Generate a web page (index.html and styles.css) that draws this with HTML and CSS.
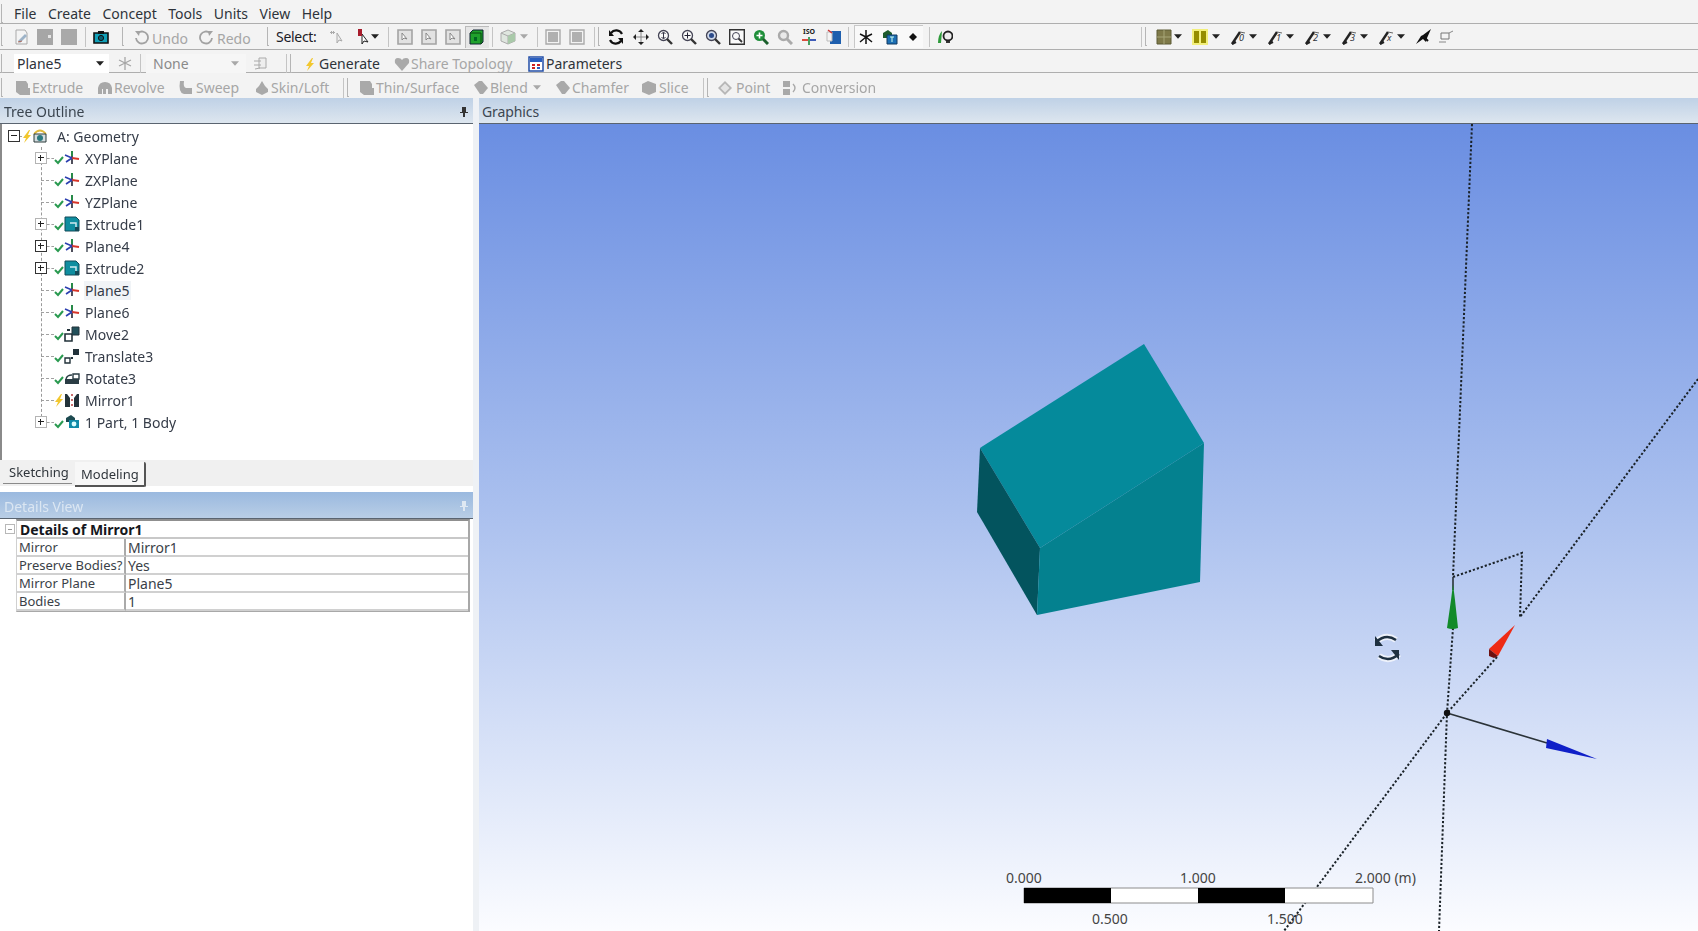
FILE: index.html
```html
<!DOCTYPE html>
<html>
<head>
    <title>DesignModeler</title>
    <link rel="stylesheet" href="styles.css">
</head>
<body>

<svg class="defs">
    <symbol id="caret" viewBox="0 0 9 5"><path d="M0 0h9L4.5 5z"/></symbol>
    <symbol id="check" viewBox="0 0 10 16"><path d="M1 10l3 3 5-6" fill="none" stroke="#2a9a50" stroke-width="2"/></symbol>
    <symbol id="bolt" viewBox="0 0 10 16"><path d="M7 2L1 10h3l-2 5 7-8H6l2-5z" fill="#f2c72e"/></symbol>
    <symbol id="plane" viewBox="0 0 16 16"><path d="M8 1v13" stroke="#223" stroke-width="1.6"/><path d="M8 1v5" stroke="#1f9a45" stroke-width="1.6"/><path d="M8 8l7 1" stroke="#d8362a" stroke-width="2"/><path d="M8 8L1 5M8 8l-6 4" stroke="#2b3fb0" stroke-width="1.6"/></symbol>
    <symbol id="extrude" viewBox="0 0 16 16"><path d="M1 1h11l3 3v11H1z" fill="#0f8ea0" stroke="#134a58"/><path d="M6 7h6v6" fill="none" stroke="#cfeaf0" stroke-width="1.5"/><path d="M11 11h4v4h-4z" fill="#134a58"/></symbol>
    <symbol id="geom" viewBox="0 0 16 16"><path d="M2 6q6-7 12 0" fill="none" stroke="#e0b93a" stroke-width="1.8"/><path d="M2 6h12v8H2z" fill="#d5dde0" stroke="#2a3a3a"/><circle cx="8" cy="10" r="3" fill="#2b7a80"/></symbol>
    <symbol id="move" viewBox="0 0 16 16"><path d="M1 8h7v7H1z" fill="#fff" stroke="#22323a" stroke-width="1.6"/><path d="M8 1h7v8H8z" fill="#22505a" stroke="#22323a"/><path d="M3 3h3v2H3z" fill="#22323a"/></symbol>
    <symbol id="translate" viewBox="0 0 16 16"><path d="M1 10h5v5H1z" fill="#fff" stroke="#22323a" stroke-width="1.4"/><path d="M9 1h6v6H9z" fill="#22323a"/><path d="M7 9h2v2H7z" fill="#22323a"/></symbol>
    <symbol id="rotate" viewBox="0 0 16 16"><path d="M1 9h14v5H1z" fill="#2a3c44"/><path d="M9 4h6v5H9z" fill="#fff" stroke="#2a3c44" stroke-width="1.4"/><path d="M2 9q1-4 6-4" fill="none" stroke="#2a3c44" stroke-width="1.4"/></symbol>
    <symbol id="mirror" viewBox="0 0 16 16"><path d="M1 15V2h2l3 4v9z" fill="#22323a"/><path d="M15 15V2h-2l-3 4v9z" fill="#22323a"/><path d="M8 2v2M8 7v2M8 12v2" stroke="#b03030" stroke-width="1.4"/></symbol>
    <symbol id="part" viewBox="0 0 16 16"><path d="M2 4l5-3 4 3v4H2z" fill="#1d4a50"/><path d="M5 6h10v8H5z" fill="#108ba8" rx="2"/><circle cx="10" cy="10" r="2.4" fill="#dff"/></symbol>

    <symbol id="t-new" viewBox="0 0 16 16"><path d="M3 1h9l2 3v11H3z" fill="#f4f4f4" stroke="#a9a9a9"/><path d="M5 12l7-7 2 2-7 7z" fill="#9db3c8"/><path d="M5 13l4-1" stroke="#b06c5c"/></symbol>
    <symbol id="t-save" viewBox="0 0 16 16"><path d="M0 0h16v16H0z" fill="#a6a6a6"/><path d="M11 6h3v3h-3z" fill="#e4e4e4"/></symbol>
    <symbol id="t-fill" viewBox="0 0 16 16"><path d="M0 0h16v16H0z" fill="#a9a9a9"/></symbol>
    <symbol id="t-cam" viewBox="0 0 16 16"><path d="M1 4h14v10H1z" fill="#12a0b8" stroke="#111" stroke-width="1.6"/><path d="M5 2h6v3H5z" fill="#111"/><circle cx="8" cy="9" r="2.6" fill="#0b5d70" stroke="#111"/></symbol>
    <symbol id="t-undo" viewBox="0 0 16 16"><path d="M5 4a6 6 0 1 1-2 5" fill="none" stroke="#a2a2a2" stroke-width="1.8"/><path d="M2 2l5 0-1 5z" fill="#a2a2a2"/></symbol>
    <symbol id="t-redo" viewBox="0 0 16 16"><path d="M11 4a6 6 0 1 0 2 5" fill="none" stroke="#a2a2a2" stroke-width="1.8"/><path d="M14 2H9l1 5z" fill="#a2a2a2"/></symbol>
    <symbol id="t-sel0" viewBox="0 0 16 16"><path d="M9 4v10l2-3 3 1z" fill="#eee" stroke="#aaa"/><path d="M3 2l3 3M6 2L3 5M2 3.500h5" stroke="#aaa"/></symbol>
    <symbol id="t-sel1" viewBox="0 0 16 16"><path d="M7 5v10l2-3 4 1z" fill="#fff" stroke="#222"/><path d="M3 0h4v7H3z" fill="#a81c2c"/></symbol>
    <symbol id="t-box" viewBox="0 0 16 16"><path d="M1 1h14v14H1z" fill="#e2e2e2" stroke="#a4a4a4" stroke-width="1.6"/><path d="M5 4v7l2-2 3 1z" fill="#fff" stroke="#888"/></symbol>
    <symbol id="t-green" viewBox="0 0 16 16"><path d="M1 4l3-3h10v12l-2 2H1z" fill="#1fa12c" stroke="#123"/><path d="M1 4h11v11" fill="none" stroke="#0a4a10"/><path d="M5 8h3v4H5z" fill="#062"/></symbol>
    <symbol id="t-cube" viewBox="0 0 16 16"><path d="M8 1l7 3v8l-7 3-7-3V4z" fill="#dfe6df" stroke="#aaa"/><path d="M1 4l7 3 7-3M8 7v8" fill="none" stroke="#aaa"/><path d="M8 7l7-3v8l-7 3z" fill="#a9c9a9"/></symbol>
    <symbol id="t-frame" viewBox="0 0 16 16"><path d="M1 1h14v14H1z" fill="none" stroke="#aaa" stroke-width="1.4"/><path d="M3 3h10v10H3z" fill="#b0b0b0"/></symbol>
    <symbol id="t-rot" viewBox="0 0 16 16"><path d="M14 5A6.500 6.500 0 0 0 3 4M2 11a6.500 6.500 0 0 0 11 1" fill="none" stroke="#111" stroke-width="2.200"/><path d="M1 1v6h5zM15 15V9h-5z" fill="#111"/></symbol>
    <symbol id="t-pan" viewBox="0 0 16 16"><path d="M8 0l3 3H5zM8 16l-3-3h6zM0 8l3-3v6zM16 8l-3 3V5z" fill="#222"/><path d="M8 3v10M3 8h10" stroke="#888"/></symbol>
    <symbol id="t-zoom" viewBox="0 0 16 16"><circle cx="6.500" cy="6.500" r="5" fill="#f8f8f8" stroke="#445" stroke-width="1.300"/><path d="M10 10l5 5" stroke="#333" stroke-width="2.400"/><path d="M6.500 3.500v6M4.500 5l2-2 2 2M4.500 8l2 2 2-2" fill="none" stroke="#334"/></symbol>
    <symbol id="t-zplus" viewBox="0 0 16 16"><circle cx="6.500" cy="6.500" r="5" fill="#f8f8f8" stroke="#445" stroke-width="1.300"/><path d="M10 10l5 5" stroke="#333" stroke-width="2.400"/><path d="M6.500 3.500v6M3.500 6.500h6" stroke="#223"/></symbol>
    <symbol id="t-zfit" viewBox="0 0 16 16"><circle cx="6.500" cy="6.500" r="5" fill="#cfd9ea" stroke="#445" stroke-width="1.300"/><path d="M10 10l5 5" stroke="#333" stroke-width="2.400"/><circle cx="6.500" cy="6.500" r="2.500" fill="#2b4a8a"/></symbol>
    <symbol id="t-zbox" viewBox="0 0 16 16"><path d="M.7.7h14.600v14.600H.7z" fill="#fafafa" stroke="#333" stroke-width="1.400"/><circle cx="7" cy="7" r="3.500" fill="none" stroke="#445"/><path d="M9.500 9.500l3.500 3.500" stroke="#333" stroke-width="1.800"/></symbol>
    <symbol id="t-zgreen" viewBox="0 0 16 16"><circle cx="6.500" cy="6.500" r="5.500" fill="#1f8f3a"/><path d="M10 10l5 5" stroke="#1b5f2c" stroke-width="3"/><path d="M6.500 3.500v6M3.500 6.500h6" stroke="#fff" stroke-width="1.600"/></symbol>
    <symbol id="t-zgrey" viewBox="0 0 16 16"><circle cx="6.500" cy="6.500" r="4.500" fill="#e9e9e9" stroke="#aaa" stroke-width="2.400"/><path d="M10 10l5 5" stroke="#aaa" stroke-width="3"/></symbol>
    <symbol id="t-iso" viewBox="0 0 16 16"><path d="M8 8v8" stroke="#1a8a3a" stroke-width="1.600"/><path d="M1 11h6" stroke="#d83a2a" stroke-width="1.800"/><path d="M9 11h6" stroke="#2a4ab0" stroke-width="1.800"/></symbol>
    <symbol id="t-book" viewBox="0 0 16 16"><path d="M4 2h11v13H4z" fill="#1e5fae"/><path d="M1 3h5v9H1z" fill="#f4f4f4" stroke="#bbb"/><path d="M2 1l4 3" stroke="#c33" stroke-width="1.500"/></symbol>
    <symbol id="t-ax" viewBox="0 0 16 16"><path d="M8 1v14M8 8l6 5M8 8l-6 5M8 8L2 5M8 8l6-3" stroke="#111" stroke-width="1.500"/></symbol>
    <symbol id="t-blue" viewBox="0 0 16 16"><path d="M1 4l5-3 4 3v5H1z" fill="#1d5a2c"/><path d="M5 6h10v9H5z" fill="#1c6fb4" stroke="#123a60"/><path d="M8 8h4M10 8v5" stroke="#cfe"/></symbol>
    <symbol id="t-dot" viewBox="0 0 16 16"><path d="M8 4l4 4-4 4-4-4z" fill="#111"/></symbol>
    <symbol id="t-head" viewBox="0 0 16 16"><path d="M1 14q0-8 4-12l-1 12z" fill="#2d9a3a"/><circle cx="11" cy="7" r="4.500" fill="#eee" stroke="#222" stroke-width="1.800"/><path d="M9 13h4" stroke="#222" stroke-width="1.800"/></symbol>
    <symbol id="t-brown" viewBox="0 0 16 16"><path d="M1 1h14v14H1z" fill="#7f7a4a" stroke="#5c5a35"/><path d="M8 1v14M1 8h14" stroke="#a8a678"/></symbol>
    <symbol id="t-yellow" viewBox="0 0 16 16"><path d="M0 0h16v16H0z" fill="#f2ef7a"/><path d="M2 2h5v12H2zM9 2h5v12H9z" fill="#958d00"/></symbol>
    <symbol id="t-filter" viewBox="0 0 16 16"><path d="M1 15L9 3" stroke="#222" stroke-width="2.400"/><path d="M9 3l5 1" stroke="#666"/><path d="M1 15l4-2" stroke="#222" stroke-width="2"/></symbol>
    <symbol id="t-jet" viewBox="0 0 16 16"><path d="M0 15l5-8 2-1 8-6-4 9-1 4-3-3z" fill="#111"/><path d="M9 9l3 3" stroke="#111" stroke-width="2"/></symbol>
    <symbol id="t-small" viewBox="0 0 16 16"><path d="M3 4h8v6H3z" fill="#f4f4f4" stroke="#777"/><path d="M1 13h7M11 4l4-2" stroke="#888"/></symbol>
    <symbol id="t-plane-g" viewBox="0 0 16 16"><path d="M8 1v13M8 7l6 3M8 7l-6 3M8 7L2 4M8 7l6-3" stroke="#a6a6a6" stroke-width="1.300"/></symbol>
    <symbol id="t-note" viewBox="0 0 16 16"><path d="M7 2h7v10H7z" fill="#eee" stroke="#aaa"/><path d="M2 5h7M2 9h7M3 13l5-1" stroke="#aaa"/></symbol>
    <symbol id="t-heart" viewBox="0 0 16 16"><path d="M8 15L1 7q-1-5 3-5 3 0 4 2 1-2 4-2 4 0 3 5z" fill="#a9a9a9"/></symbol>
    <symbol id="t-param" viewBox="0 0 16 16"><path d="M1 1h14v14H1z" fill="#fff" stroke="#234fa8" stroke-width="1.500"/><path d="M2 2h12v4H2z" fill="#2a5fc0"/><path d="M4 8h3v2H4zM9 8h3v2H9zM4 11h3v2H4z" fill="#c22"/><path d="M9 11h3v2H9z" fill="#2a5fc0"/></symbol>
    <symbol id="t-solid" viewBox="0 0 16 16"><path d="M1 1h10l2 3v4h2v7H5l-4-3z" fill="#a9a9a9"/></symbol>
    <symbol id="t-revolve" viewBox="0 0 16 16"><path d="M1 14V8q1-6 7-6t7 6v6h-4V9H9v5H6V9H5v5z" fill="#a9a9a9"/></symbol>
    <symbol id="t-sweep" viewBox="0 0 16 16"><path d="M3 1h4q-1 6 2 7h6v6H7Q1 13 3 1z" fill="#a9a9a9"/></symbol>
    <symbol id="t-skin" viewBox="0 0 16 16"><path d="M8 1l3 5 3 3v3l-6 3-6-3V9l3-3z" fill="#a9a9a9"/></symbol>
    <symbol id="t-diamond" viewBox="0 0 16 16"><path d="M1 5l5-4h3l6 7-5 6H7z" fill="#a9a9a9"/></symbol>
    <symbol id="t-slice" viewBox="0 0 16 16"><path d="M1 4l6-3 8 3v8l-7 3-7-3z" fill="#a9a9a9"/></symbol>
    <symbol id="t-point" viewBox="0 0 16 16"><path d="M8 1l7 7-7 7-7-7z" fill="#b6b6b6"/><path d="M8 3.500L12.500 8 8 12.500 3.500 8z" fill="#e4e4e4"/></symbol>
    <symbol id="t-conv" viewBox="0 0 16 16"><path d="M1 1h7v6H1zM1 9h7v6H1z" fill="#a9a9a9"/><path d="M11 4q4 4 0 8" fill="none" stroke="#a9a9a9" stroke-width="1.400"/></symbol>
</svg>

<div class="app">

<div class="menubar">
    <span class="grip"></span>
    <span class="menu first">File</span>
    <span class="menu">Create</span>
    <span class="menu">Concept</span>
    <span class="menu">Tools</span>
    <span class="menu">Units</span>
    <span class="menu">View</span>
    <span class="menu">Help</span>
</div>

<div class="toolbar row1">
    <span class="grip"></span>
    <span class="ib m5"><svg><use href="#t-new"/></svg></span>
    <span class="ib"><svg><use href="#t-save"/></svg></span>
    <span class="ib"><svg><use href="#t-fill"/></svg></span>
    <span class="sep m4"></span>
    <span class="ib m3"><svg><use href="#t-cam"/></svg></span>
    <span class="grip m9"></span>
    <svg class="ic m8"><use href="#t-undo"/></svg>
    <span class="off low m3 w34">Undo</span>
    <svg class="ic m13"><use href="#t-redo"/></svg>
    <span class="off low m2 w34">Redo</span>
    <span class="grip m16"></span>
    <span class="m6 sel">Select:</span>
    <span class="ib m5"><svg><use href="#t-sel0"/></svg></span>
    <svg class="ic m7"><use href="#t-sel1"/></svg>
    <svg class="caret"><use href="#caret"/></svg>
    <span class="sep m9"></span>
    <span class="ib m4"><svg><use href="#t-box"/></svg></span>
    <span class="ib"><svg><use href="#t-box"/></svg></span>
    <span class="ib"><svg><use href="#t-box"/></svg></span>
    <span class="ib on"><svg><use href="#t-green"/></svg></span>
    <span class="sep m3"></span>
    <svg class="ic m7"><use href="#t-cube"/></svg>
    <svg class="caret off-caret m4"><use href="#caret"/></svg>
    <span class="sep m9"></span>
    <span class="ib m3"><svg><use href="#t-frame"/></svg></span>
    <span class="ib"><svg><use href="#t-frame"/></svg></span>
    <span class="sep m5"></span>
    <span class="grip m3"></span>
    <span class="ib m3"><svg><use href="#t-rot"/></svg></span>
    <span class="ib m1"><svg><use href="#t-pan"/></svg></span>
    <span class="ib"><svg><use href="#t-zoom"/></svg></span>
    <span class="ib"><svg><use href="#t-zplus"/></svg></span>
    <span class="ib"><svg><use href="#t-zfit"/></svg></span>
    <span class="ib"><svg><use href="#t-zbox"/></svg></span>
    <span class="ib"><svg><use href="#t-zgreen"/></svg></span>
    <span class="ib"><svg><use href="#t-zgrey"/></svg></span>
    <span class="ib iso"><b>ISO</b><svg><use href="#t-iso"/></svg></span>
    <span class="ib m1"><svg><use href="#t-book"/></svg></span>
    <span class="sep m2"></span>
    <span class="toggles m5">
        <span class="ib"><svg><use href="#t-ax"/></svg></span>
        <span class="ib"><svg><use href="#t-blue"/></svg></span>
        <span class="ib last"><svg><use href="#t-dot"/></svg></span>
    </span>
    <span class="sep m6"></span>
    <span class="ib m3"><svg><use href="#t-head"/></svg></span>
    <span class="sep m184"></span>
    <span class="grip m3"></span>
    <svg class="ic m8"><use href="#t-brown"/></svg>
    <svg class="caret m2"><use href="#caret"/></svg>
    <svg class="ic m10"><use href="#t-yellow"/></svg>
    <svg class="caret m4"><use href="#caret"/></svg>
    <span class="flt m11"><svg><use href="#t-filter"/></svg><b>0</b></span>
    <svg class="caret m2"><use href="#caret"/></svg>
    <span class="flt m11"><svg><use href="#t-filter"/></svg><b>1</b></span>
    <svg class="caret m2"><use href="#caret"/></svg>
    <span class="flt m11"><svg><use href="#t-filter"/></svg><b>2</b></span>
    <svg class="caret m2"><use href="#caret"/></svg>
    <span class="flt m11"><svg><use href="#t-filter"/></svg><b>3</b></span>
    <svg class="caret m2"><use href="#caret"/></svg>
    <span class="flt m11"><svg><use href="#t-filter"/></svg><b>x</b></span>
    <svg class="caret m2"><use href="#caret"/></svg>
    <svg class="ic m11"><use href="#t-jet"/></svg>
    <svg class="ic m6"><use href="#t-small"/></svg>
</div>

<div class="toolbar row2">
    <span class="grip"></span>
    <span class="combo m10">Plane5<svg class="caret"><use href="#caret"/></svg></span>
    <svg class="ic m8"><use href="#t-plane-g"/></svg>
    <span class="sep m7"></span>
    <span class="combo none m5">None<svg class="caret off-caret"><use href="#caret"/></svg></span>
    <svg class="ic m6"><use href="#t-note"/></svg>
    <span class="sep m18"></span>
    <span class="grip m3"></span>
    <svg class="ic m9"><use href="#bolt"/></svg>
    <span class="m1 w60">Generate</span>
    <svg class="ic m15"><use href="#t-heart"/></svg>
    <span class="off m1 w103">Share Topology</span>
    <svg class="ic m14"><use href="#t-param"/></svg>
    <span class="m2">Parameters</span>
</div>

<div class="toolbar row3">
    <span class="grip"></span>
    <svg class="ic m11"><use href="#t-solid"/></svg><span class="off m1 w49">Extrude</span>
    <svg class="ic m16"><use href="#t-revolve"/></svg><span class="off m1 w50">Revolve</span>
    <svg class="ic m13"><use href="#t-sweep"/></svg><span class="off m3 w43">Sweep</span>
    <svg class="ic m15"><use href="#t-skin"/></svg><span class="off m1 w58">Skin/Loft</span>
    <span class="sep m14"></span>
    <span class="grip m3"></span>
    <svg class="ic m9"><use href="#t-solid"/></svg><span class="off m1 w82">Thin/Surface</span>
    <svg class="ic m15"><use href="#t-diamond"/></svg><span class="off m1 w38">Blend</span>
    <svg class="caret off-caret m5"><use href="#caret"/></svg>
    <svg class="ic m14"><use href="#t-diamond"/></svg><span class="off m1 w56">Chamfer</span>
    <svg class="ic m13"><use href="#t-slice"/></svg><span class="off m2 w30">Slice</span>
    <span class="sep m14"></span>
    <span class="grip m3"></span>
    <svg class="ic m7"><use href="#t-point"/></svg><span class="off m3 w33">Point</span>
    <svg class="ic m13"><use href="#t-conv"/></svg><span class="off m4">Conversion</span>
</div>

<div class="main">
    <div class="left">
        <div class="paneHead">
            <span>Tree Outline</span>
            <svg class="pin" viewBox="0 0 8 10"><path d="M2 0h4v5h2v1H5v4H3V6H0V5h2z" fill="#333"/></svg>
        </div>
        <div class="tree">
            <div class="treeRow root">
                <span class="exp"><i></i></span><span class="stub s3"></span>
                <svg class="bolt"><use href="#bolt"/></svg>
                <svg class="ti"><use href="#geom"/></svg>
                <span class="label rootLabel">A: Geometry</span>
            </div>
            <div class="kids">
                <div class="treeRow"><span class="exp dim"><i></i><u></u></span><span class="stub"></span><svg class="chk"><use href="#check"/></svg><svg class="ti"><use href="#plane"/></svg><span class="label">XYPlane</span></div>
                <div class="treeRow"><span class="gap"></span><span class="stub long"></span><svg class="chk"><use href="#check"/></svg><svg class="ti"><use href="#plane"/></svg><span class="label">ZXPlane</span></div>
                <div class="treeRow"><span class="gap"></span><span class="stub long"></span><svg class="chk"><use href="#check"/></svg><svg class="ti"><use href="#plane"/></svg><span class="label">YZPlane</span></div>
                <div class="treeRow"><span class="exp dim"><i></i><u></u></span><span class="stub"></span><svg class="chk"><use href="#check"/></svg><svg class="ti"><use href="#extrude"/></svg><span class="label">Extrude1</span></div>
                <div class="treeRow"><span class="exp"><i></i><u></u></span><span class="stub"></span><svg class="chk"><use href="#check"/></svg><svg class="ti"><use href="#plane"/></svg><span class="label">Plane4</span></div>
                <div class="treeRow"><span class="exp"><i></i><u></u></span><span class="stub"></span><svg class="chk"><use href="#check"/></svg><svg class="ti"><use href="#extrude"/></svg><span class="label">Extrude2</span></div>
                <div class="treeRow"><span class="gap"></span><span class="stub long"></span><svg class="chk"><use href="#check"/></svg><svg class="ti"><use href="#plane"/></svg><span class="label current">Plane5</span></div>
                <div class="treeRow"><span class="gap"></span><span class="stub long"></span><svg class="chk"><use href="#check"/></svg><svg class="ti"><use href="#plane"/></svg><span class="label">Plane6</span></div>
                <div class="treeRow"><span class="gap"></span><span class="stub long"></span><svg class="chk"><use href="#check"/></svg><svg class="ti"><use href="#move"/></svg><span class="label">Move2</span></div>
                <div class="treeRow"><span class="gap"></span><span class="stub long"></span><svg class="chk"><use href="#check"/></svg><svg class="ti"><use href="#translate"/></svg><span class="label">Translate3</span></div>
                <div class="treeRow"><span class="gap"></span><span class="stub long"></span><svg class="chk"><use href="#check"/></svg><svg class="ti"><use href="#rotate"/></svg><span class="label">Rotate3</span></div>
                <div class="treeRow"><span class="gap"></span><span class="stub long"></span><svg class="chk"><use href="#bolt"/></svg><svg class="ti"><use href="#mirror"/></svg><span class="label">Mirror1</span></div>
                <div class="treeRow"><span class="exp dim"><i></i><u></u></span><span class="stub"></span><svg class="chk"><use href="#check"/></svg><svg class="ti"><use href="#part"/></svg><span class="label">1 Part, 1 Body</span></div>
            </div>
        </div>
        <div class="tabs">
            <span class="tab">Sketching</span>
            <span class="tab active">Modeling</span>
        </div>
        <div class="paneHead details">
            <span>Details View</span>
            <svg class="pin" viewBox="0 0 8 10"><path d="M2 0h4v5h2v1H5v4H3V6H0V5h2z" fill="#dfe8f2"/></svg>
        </div>
        <div class="detailsBody">
            <span class="collapse"><i></i></span>
            <div class="grid">
                <div class="gridHead">Details of Mirror1</div>
                <div class="cell key">Mirror</div><div class="cell val">Mirror1</div>
                <div class="cell key">Preserve Bodies?</div><div class="cell val">Yes</div>
                <div class="cell key">Mirror Plane</div><div class="cell val">Plane5</div>
                <div class="cell key">Bodies</div><div class="cell val">1</div>
            </div>
        </div>
    </div>
    <div class="sash"></div>
    <div class="right">
        <div class="paneHead"><span>Graphics</span></div>
        <div class="canvas">
            <svg class="scene" viewBox="479 124 1219 807">
                <!-- body -->
                <path d="M980 448L1144 344L1204 443L1040 548z" fill="#058a9b"/>
                <path d="M980 448L977 512L1037 615L1040 548z" fill="#03545e"/>
                <path d="M1040 548L1204 443L1200 582L1037 615z" fill="#04818f"/>

                <!-- triad dotted lines -->
                <g class="dots">
                    <path d="M1472 124L1453 577M1453 628L1447 713L1439 931"/>
                    <path d="M1453 577L1522 553L1520 617"/>
                    <path d="M1698 379L1520 617M1497 657L1447 713L1284 931"/>
                </g>
                <path d="M1453 577V590M1447 713L1547 743" stroke="#2b3338" stroke-width="1.600" fill="none"/>
                <circle cx="1447" cy="713" r="3.200" fill="#111"/>
                <path d="M1453 584L1451 600L1447 628Q1452 630 1458 628L1455 600z" fill="#118a2a"/>
                <path d="M1515 625L1489 649L1498 656z" fill="#ee2a14"/>
                <path d="M1489 649L1489 656L1494 658L1498 656z" fill="#6e1010"/>
                <path d="M1547 739L1546 748L1597 759z" fill="#0f1fc8"/>

                <!-- rotate cursor -->
                <g class="spinHalo">
                    <path d="M1376 642q10-9 20-2M1399 654q-10 9-20 2"/>
                </g>
                <g class="spin">
                    <path d="M1376 642q10-9 20-2M1399 654q-10 9-20 2"/>
                </g>
                <g fill="#1e3040">
                    <path d="M1375 636v10h8z"/>
                    <path d="M1399 660v-10h-8z"/>
                </g>

                <!-- scale -->
                <path d="M1024 888h349v15h-349z" fill="#fff" stroke="#8c8c8c"/>
                <path d="M1024 888h87v15h-87zM1198 888h87v15h-87z" fill="#000"/>
                <g class="ticks">
                    <text x="1024" y="883" text-anchor="middle">0.000</text>
                    <text x="1198" y="883" text-anchor="middle">1.000</text>
                    <text x="1355" y="883">2.000 (m)</text>
                    <text x="1110" y="924" text-anchor="middle">0.500</text>
                    <text x="1285" y="924" text-anchor="middle">1.500</text>
                </g>
            </svg>
        </div>
    </div>
</div>

</div>

</body>
</html>
```

FILE: styles.css
```css
html, body {
    margin: 0;
    padding: 0;
    height: 100%;
    overflow: hidden;
}

body {
    font-family: "Noto Sans", "Open Sans", sans-serif;
    font-size: 14px;
    color: #2e333a;
    background-color: #f2f2f2;
}

.defs {
    position: absolute;
    width: 0;
    height: 0;
}

.app {
    height: 931px;
    display: flex;
    flex-direction: column;
    filter: blur(0.4px);
}

/* toolbars */
.menubar, .toolbar {
    display: flex;
    align-items: center;
    flex: none;
    box-sizing: border-box;
    padding-left: 1px;
    background-color: #f3f3f3;
    border-bottom: 1px solid #aeaeae;
    white-space: nowrap;
}

.menubar { height: 24px; padding-top: 4px; }
.row1 { height: 26px; }
.row2 { height: 23px; padding-top: 5px; }
.row3 { height: 25px; padding-top: 4px; border-bottom: none; }

.menu { margin-left: 11.5px; }
.menu.first { margin-left: 10px; }

.grip {
    width: 1px;
    height: 18px;
    border-left: 1px solid #b5b5b5;
    border-bottom: 1px solid #b5b5b5;
    margin-right: 1px;
    flex: none;
}

.sep {
    width: 1px;
    height: 20px;
    background-color: #c4c4c4;
    flex: none;
}

.ib {
    position: relative;
    width: 24px;
    height: 22px;
    display: flex;
    align-items: center;
    justify-content: center;
    flex: none;
}

.ib svg, .ic {
    width: 16px;
    height: 16px;
    flex: none;
}

.ib.on {
    background-color: #e6e6e6;
    box-shadow: inset 1px 1px #bbb;
}

.iso b {
    position: absolute;
    top: 2px;
    left: 0;
    right: 0;
    text-align: center;
    font-size: 7px;
    line-height: 8px;
    color: #222;
}

.caret {
    width: 8px;
    height: 5px;
    fill: #222;
    flex: none;
}

.off-caret { fill: #a8a8a8; }
.off { color: #a6a6a6; }
.low { padding-top: 4px; }
.sel { width: 43px; letter-spacing: -0.3px; color: #1c2026; }

.toggles {
    display: flex;
    background-color: #f9f9f9;
    border-top: 1px solid #c8c8c8;
    box-shadow: inset 1px 0 #c8c8c8;
}

.toggles .last { width: 21px; }

.flt {
    position: relative;
    width: 16px;
    height: 16px;
    flex: none;
}

.flt svg {
    width: 16px;
    height: 16px;
}

.flt b {
    position: absolute;
    left: 8px;
    top: 3px;
    font-size: 9px;
    font-weight: 400;
    font-style: italic;
    line-height: 12px;
}

.combo {
    display: flex;
    align-items: center;
    justify-content: space-between;
    width: 95px;
    height: 20px;
    padding: 0 5px 0 3px;
    box-sizing: border-box;
    background-color: #fff;
}

.combo.none {
    width: 100px;
    padding-left: 7px;
    padding-right: 7px;
    background-color: #f6f6f6;
    color: #8a8a8a;
}

.w30 { width: 30px; }
.w33 { width: 33px; }
.w34 { width: 34px; }
.w38 { width: 38px; }
.w43 { width: 43px; }
.w49 { width: 49px; }
.w50 { width: 50px; }
.w56 { width: 56px; }
.w58 { width: 58px; }
.w60 { width: 60px; }
.w82 { width: 82px; }
.w103 { width: 103px; }

.m1 { margin-left: 1px; }
.m2 { margin-left: 2px; }
.m3 { margin-left: 3px; }
.m4 { margin-left: 4px; }
.m5 { margin-left: 5px; }
.m6 { margin-left: 6px; }
.m7 { margin-left: 7px; }
.m8 { margin-left: 8px; }
.m9 { margin-left: 9px; }
.m10 { margin-left: 10px; }
.m11 { margin-left: 11px; }
.m13 { margin-left: 13px; }
.m14 { margin-left: 14px; }
.m15 { margin-left: 15px; }
.m16 { margin-left: 16px; }
.m18 { margin-left: 18px; }
.m184 { margin-left: 184px; }

/* panes */
.main {
    flex: 1;
    display: flex;
    min-height: 0;
}

.left {
    width: 473px;
    display: flex;
    flex-direction: column;
    background-color: #fff;
}

.sash {
    width: 6px;
    background-color: #eef1f5;
}

.right {
    flex: 1;
    display: flex;
    flex-direction: column;
}

.paneHead {
    height: 26px;
    flex: none;
    box-sizing: border-box;
    display: flex;
    align-items: center;
    justify-content: space-between;
    padding: 2px 5px 0 4px;
    background: linear-gradient(#bfd1e6, #dde6ef);
    border-bottom: 1px solid #5a6470;
    color: #3c4650;
}

.right .paneHead { padding-left: 3px; letter-spacing: -0.1px; }

.paneHead.details {
    height: 27px;
    background: linear-gradient(#9ab9df, #b9cee6);
    color: #dbe6f2;
}

.pin {
    width: 8px;
    height: 10px;
}

/* tree */
.tree {
    height: 336px;
    flex: none;
    padding-top: 1px;
    box-sizing: border-box;
    border-left: 2px solid #8a8a8a;
    color: #353c48;
}

.treeRow {
    display: flex;
    align-items: center;
    height: 22px;
}

.root { padding-left: 6px; }

.kids {
    position: relative;
    padding-left: 33px;
}

.kids::before {
    content: "";
    position: absolute;
    left: 39px;
    top: 0;
    bottom: 11px;
    border-left: 1px dashed #9a9a9a;
}

.exp {
    position: relative;
    width: 12px;
    height: 12px;
    box-sizing: border-box;
    border: 1px solid #333;
    background-color: #fff;
    flex: none;
    z-index: 1;
}

.exp.dim { border-color: #b4b4b4; }

.exp i, .exp u, .collapse i {
    position: absolute;
    background-color: #222;
}

.exp i { left: 2px; right: 2px; top: 4px; height: 1px; }
.exp u { top: 2px; bottom: 2px; left: 4px; width: 1px; }

.stub {
    width: 7px;
    height: 0;
    border-top: 1px dashed #a0a0a0;
    flex: none;
}

.stub.s3 { width: 2px; }
.stub.long { width: 13px; }
.gap { width: 6px; flex: none; }

.chk {
    width: 10px;
    height: 16px;
    flex: none;
}

.bolt {
    width: 10px;
    height: 16px;
    flex: none;
}

.ti {
    width: 16px;
    height: 16px;
    flex: none;
}

.label { margin-left: 4px; padding: 0 1px; }
.rootLabel { margin-left: 8px; }
.current { background-color: #f1f4f7; }

.tabs {
    height: 32px;
    flex: none;
    box-sizing: border-box;
    padding: 2px 0 0 3px;
    display: flex;
    align-items: flex-start;
    font-size: 13px;
    background: linear-gradient(#f0f0f0 26px, #fff 26px);
}

.tab {
    height: 22px;
    width: 69px;
    box-sizing: border-box;
    padding-left: 6px;
    line-height: 21px;
    border-bottom: 1px solid #8a8a8a;
    color: #30363c;
}

.tab.active {
    width: 71px;
    height: 25px;
    margin-left: 3px;
    padding-left: 6px;
    line-height: 25px;
    background-color: #f7f7f7;
    border-right: 2px solid #555;
    border-bottom: 2px solid #555;
    border-radius: 0 2px 2px 0;
}

/* details grid */
.detailsBody {
    flex: 1;
    position: relative;
    padding-left: 16px;
    padding-right: 3px;
    background-color: #fff;
}

.collapse {
    position: absolute;
    left: 5px;
    top: 5px;
    width: 8px;
    height: 8px;
    border: 1px solid #b8b8b8;
}

.collapse i { left: 2px; right: 2px; top: 4px; height: 1px; background-color: #999; }

.grid {
    display: grid;
    grid-template-columns: 109px 1fr;
    grid-auto-rows: 18px;
    line-height: 17px;
    white-space: nowrap;
    border-left: 1px solid #d0d0d0;
    border-right: 2px solid #a8a8a8;
    border-top: 2px solid #8f8f8f;
    border-bottom: 1px solid #a8a8a8;
    color: #3a3f48;
}

.gridHead {
    grid-column: 1 / 3;
    padding-left: 3px;
    font-weight: 700;
    color: #15171c;
    border-bottom: 2px solid #c8c8c8;
    box-sizing: border-box;
}

.cell {
    border-bottom: 2px solid #d0d0d0;
    box-sizing: border-box;
    padding-left: 2px;
    overflow: hidden;
}

.key { border-right: 2px solid #aaa; font-size: 13px; }

/* graphics */
.canvas {
    flex: 1;
    min-height: 0;
    background: linear-gradient(#6a8ee2, #a9bfee 47%, #fbfcff);
}

.scene {
    display: block;
    width: 100%;
    height: 100%;
}

.dots path {
    fill: none;
    stroke: #1a2228;
    stroke-width: 2;
    stroke-dasharray: 2.2 2;
}

.spin path {
    fill: none;
    stroke: #1e3040;
    stroke-width: 2.5;
}

.spinHalo path {
    fill: none;
    stroke: #eef2fb;
    stroke-width: 6;
}

.ticks text {
    font-size: 14px;
    fill: #444;
}
```
